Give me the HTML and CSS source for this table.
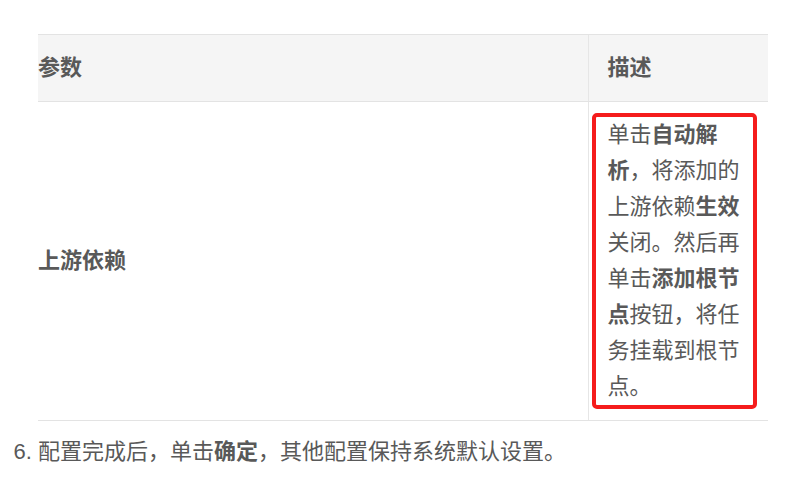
FILE: index.html
```html
<!DOCTYPE html>
<html lang="zh-CN">
<head>
  <meta charset="UTF-8">
  <meta name="viewport" content="width=device-width, initial-scale=1.0">
  <title>上游依赖</title>
  <link rel="stylesheet" href="styles.css">
</head>
<body>
  <div class="doc">
    <table class="param-table">
      <thead>
        <tr>
          <th class="col-name">参数</th>
          <th class="col-desc">描述</th>
        </tr>
      </thead>
      <tbody>
        <tr>
          <td class="col-name"><strong>上游依赖</strong></td>
          <td class="col-desc">
            <div class="mark">单击<strong>自动解析</strong>，将添加的上游依赖<strong>生效</strong>关闭。然后再单击<strong>添加根节点</strong>按钮，将任务挂载到根节点。</div>
          </td>
        </tr>
      </tbody>
    </table>

    <ol class="steps" start="6">
      <li>配置完成后，单击<strong>确定</strong>，其他配置保持系统默认设置。</li>
    </ol>
  </div>
</body>
</html>
```

FILE: styles.css
```css
/* Base */
* {
  margin: 0;
  padding: 0;
  box-sizing: border-box;
}

body {
  font-family: 'Liberation Sans', 'Noto Sans CJK SC', sans-serif;
  font-size: 22px;
  line-height: 36px;
  color: #595959;
  background: #fff;
}

.doc {
  padding-top: 34px;
}

/* Table */
.param-table {
  margin-left: 38px;
  width: 730px;
  border-collapse: collapse;
  table-layout: fixed;
}

.param-table th {
  height: 67px;
  background: #f5f5f5;
  text-align: left;
  font-weight: bold;
  border-top: 1px solid #e3e3e3;
  border-bottom: 1px solid #e3e3e3;
}

.param-table td {
  border-bottom: 1px solid #e3e3e3;
  vertical-align: middle;
}

.col-name {
  width: 550px;
  padding: 0;
}

.param-table .col-desc {
  width: 180px;
  border-left: 1px solid #e6e6e6;
}

.param-table th.col-desc {
  padding-left: 19px;
}

.param-table td.col-desc {
  padding: 11px 11px 11px 3px;
}

/* Red highlight */
.mark {
  border: 4px solid #f51c1c;
  border-radius: 5px;
  padding: 0 10px 0 12px;
}

/* Steps */
.steps {
  margin-top: 13px;
  padding-left: 38px;
}
```
